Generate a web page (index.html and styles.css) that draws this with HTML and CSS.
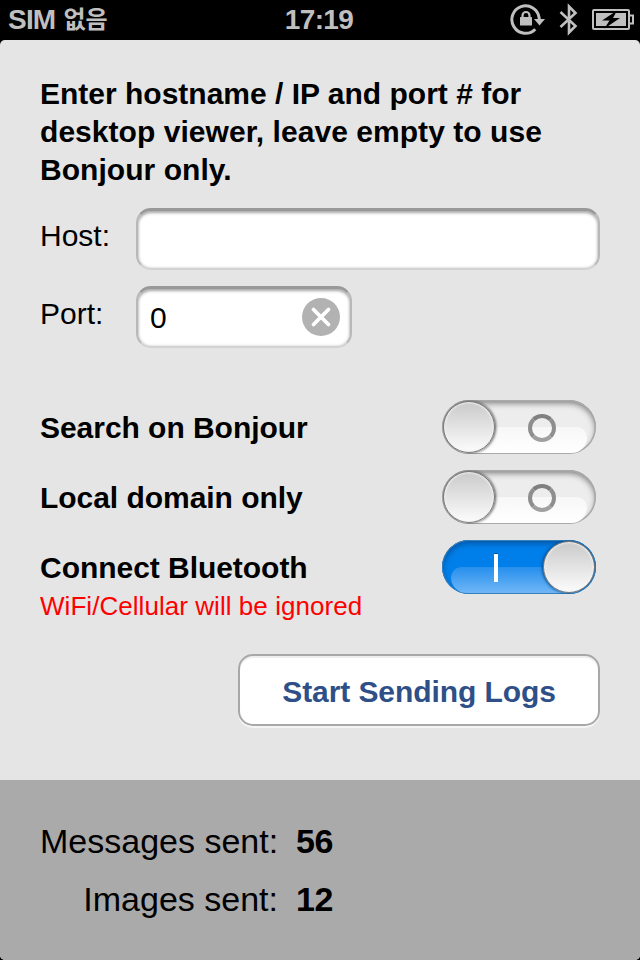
FILE: index.html
```
<!DOCTYPE html>
<html lang="en">
<head>
<meta charset="utf-8">
<title>Log settings</title>
<link rel="stylesheet" href="styles.css">
</head>
<body>
<header class="status">
  <div class="carrier"><span class="sim">SIM</span><span class="ko">없음</span></div>
  <div class="time">17:19</div>
  <div class="icons">
    <svg width="36" height="34" viewBox="0 0 36 34" fill="none" stroke="#bfbfbf" stroke-width="3">
      <path d="M25.300 26.200A13.700 13.700 0 1 1 29.200 15v2"/>
      <path d="M24 16h11l-5.500 6.500z" fill="#bfbfbf" stroke="none"/>
      <rect x="10" y="14" width="12" height="8.500" rx=".5" fill="#bfbfbf" stroke="none"/>
      <path d="M12.500 14.500v-2a3.500 3.500 0 0 1 7 0v2" stroke-width="2.200"/>
    </svg>
    <svg width="20" height="34" viewBox="0 0 20 34" fill="none" stroke="#bfbfbf" stroke-width="2.600">
      <path d="M1.500 9 16.500 23 10 29.500V3.500L16.500 10 1.500 24"/>
    </svg>
    <svg width="42" height="22" viewBox="0 0 42 22" fill="none" stroke="#bfbfbf" stroke-width="2">
      <rect x="1" y="1" width="36" height="19" rx="1"/>
      <path d="M38 6.500h3v8h-3"/>
      <path d="M4 4h30v13H4z" fill="#bfbfbf" stroke="none"/>
      <path d="M25 1.500 10 11.500h7.500L12.500 19.500 28 9h-7z" fill="#000" stroke="none"/>
    </svg>
  </div>
</header>
<main class="panel">
  <section class="settings">
    <h1 class="intro"><span class="l1">Enter hostname / IP and port # for</span><br><span class="l2">desktop viewer, leave empty to use</span><br><span class="l3">Bonjour only.</span></h1>
    <div class="row"><span class="label">Host:</span><div class="field wide"></div></div>
    <div class="row"><span class="label">Port:</span><div class="field short"><span>0</span>
      <svg class="clear" width="38" height="38" viewBox="0 0 38 38"><circle cx="19" cy="19" r="19" fill="#b2b2b2"/><path d="M11.500 11.500l15 15m0-15l-15 15" stroke="#fff" stroke-width="3.800" stroke-linecap="round"/></svg></div></div>
    <div class="switches">
      <div class="option"><span>Search on Bonjour</span><div class="switch"><i class="ring"></i><i class="knob"></i></div></div>
      <div class="option"><span>Local domain only</span><div class="switch"><i class="ring"></i><i class="knob"></i></div></div>
      <div class="option"><span>Connect Bluetooth</span><div class="switch on"><i class="bar"></i><i class="knob"></i></div></div>
    </div>
    <p class="note">WiFi/Cellular will be ignored</p>
    <button class="start">Start Sending Logs</button>
  </section>
  <footer class="counts">
    <div class="count"><span class="name">Messages sent:</span><b>56</b></div>
    <div class="count"><span class="name">Images sent:</span><b>12</b></div>
  </footer>
</main>
</body>
</html>
```
FILE: styles.css
```
* { box-sizing: border-box; }
body {
  margin: 0; width: 640px; height: 960px; overflow: hidden;
  background: #000; color: #000;
  font-family: "Liberation Sans", "Noto Sans CJK KR", sans-serif;
}
.status {
  height: 40px; display: grid; grid-template-columns: 1fr 100px 1fr;
  align-items: center; color: #bfbfbf; font-size: 28px; font-weight: bold;
  line-height: 40px;
}
.carrier { display: flex; gap: 8px; padding-left: 8px; }
.sim { letter-spacing: -.8px; }
.ko { font-family: "Noto Sans CJK KR", sans-serif; font-size: 24px; line-height: 36px; }
.time { text-align: center; letter-spacing: -.6px; padding-right: 2px; }
.icons { height: 40px; display: flex; justify-content: flex-end; align-items: center; padding-right: 6px; }
.icons svg:nth-child(1) { margin-right: 13px; }
.icons svg:nth-child(2) { margin-right: 13px; }
.panel { height: 920px; border-radius: 5px; overflow: hidden; background: #e5e5e5; }
.settings { height: 740px; padding: 35px 40px 0; display: flex; flex-direction: column; }
.intro { margin: 0 0 19px; font-size: 30px; line-height: 38px; white-space: nowrap; }
.l2, .l3 { letter-spacing: .05px; }
.row { height: 62px; margin-bottom: 16px; display: flex; align-items: center; font-size: 30px; }
.label { width: 96px; padding-bottom: 6px; white-space: nowrap; }
.field {
  height: 62px; border-radius: 15px; background: #fff;
  border: 2px solid #d2d2d2; border-top: 3px solid #999; border-left-color: #b8b8b8; border-right-color: #b8b8b8;
  box-shadow: inset 0 2px 3px #aaa, inset 0 0 3px #ccc;
  display: flex; align-items: center; justify-content: space-between; padding: 0 10px 0 12px;
}
.clear { margin-bottom: 2px; }
.wide { width: 464px; }
.short { width: 216px; }
.switches { margin-top: 36px; display: flex; flex-direction: column; gap: 16px; }
.option { height: 54px; display: flex; align-items: center; justify-content: space-between; padding-right: 4px; font-size: 30px; font-weight: bold; }
.option span { padding-top: 2px; letter-spacing: -.04px; }
.switch {
  position: relative; width: 154px; height: 54px; border-radius: 27px; overflow: hidden;
  background: #ededed; box-shadow: inset 0 0 0 1.500px #aaa, inset 0 3px 6px #777;
}
.switch::before {
  content: ""; position: absolute; left: 9px; right: 9px; top: 27px; bottom: 1px;
  border-radius: 16px 16px 24px 24px; background: linear-gradient(#f7f7f7, #fff);
}
.knob {
  position: absolute; left: 1px; top: 1px; width: 52px; height: 52px; border-radius: 50%;
  border: 1px solid #777; background: linear-gradient(#cacaca, #fcfcfc);
  box-shadow: inset 0 0 2px 1px #f2f2f2, 1px 0 3px #555;
}
.ring {
  position: absolute; left: 86px; top: 14px; width: 28px; height: 28px; border-radius: 50%;
  border: 4px solid #8e8e8e; border-top-color: #808080; border-bottom-color: #a0a0a0;
}
.on { background: #007fea; box-shadow: inset 0 0 0 1px #397fba, inset 0 3px 6px #064f98; }
.on::before { background: linear-gradient(#268fed, #70b6f6); }
.on .knob { left: 101px; box-shadow: inset 0 0 2px 1px #f2f2f2, -1px 0 3px #034b8c; }
.bar { position: absolute; left: 52px; top: 14px; width: 4px; height: 28px; background: #fff; box-shadow: 0 -1px #065394; }
.note { margin: 0; height: 24px; line-height: 24px; font-size: 26px; letter-spacing: .05px; color: #f00; white-space: nowrap; }
.start {
  align-self: flex-end; width: 362px; height: 72px; margin-top: 36px; padding: 3px 0 0;
  border: 2px solid #a8a8a8; border-radius: 15px; background: #fff; color: #2f4f88;
  font: bold 30px/36px "Liberation Sans", sans-serif; letter-spacing: -.08px;
  box-shadow: 0 2px #f5f5f5, inset 0 2px 1px #eee;
}
.counts { height: 180px; background: #aaa; padding: 32px 40px; font-size: 34px; }
.count { height: 58px; line-height: 58px; display: flex; gap: 18px; }
.count b { letter-spacing: -.5px; }
.name { width: 238px; text-align: right; white-space: nowrap; }
```
